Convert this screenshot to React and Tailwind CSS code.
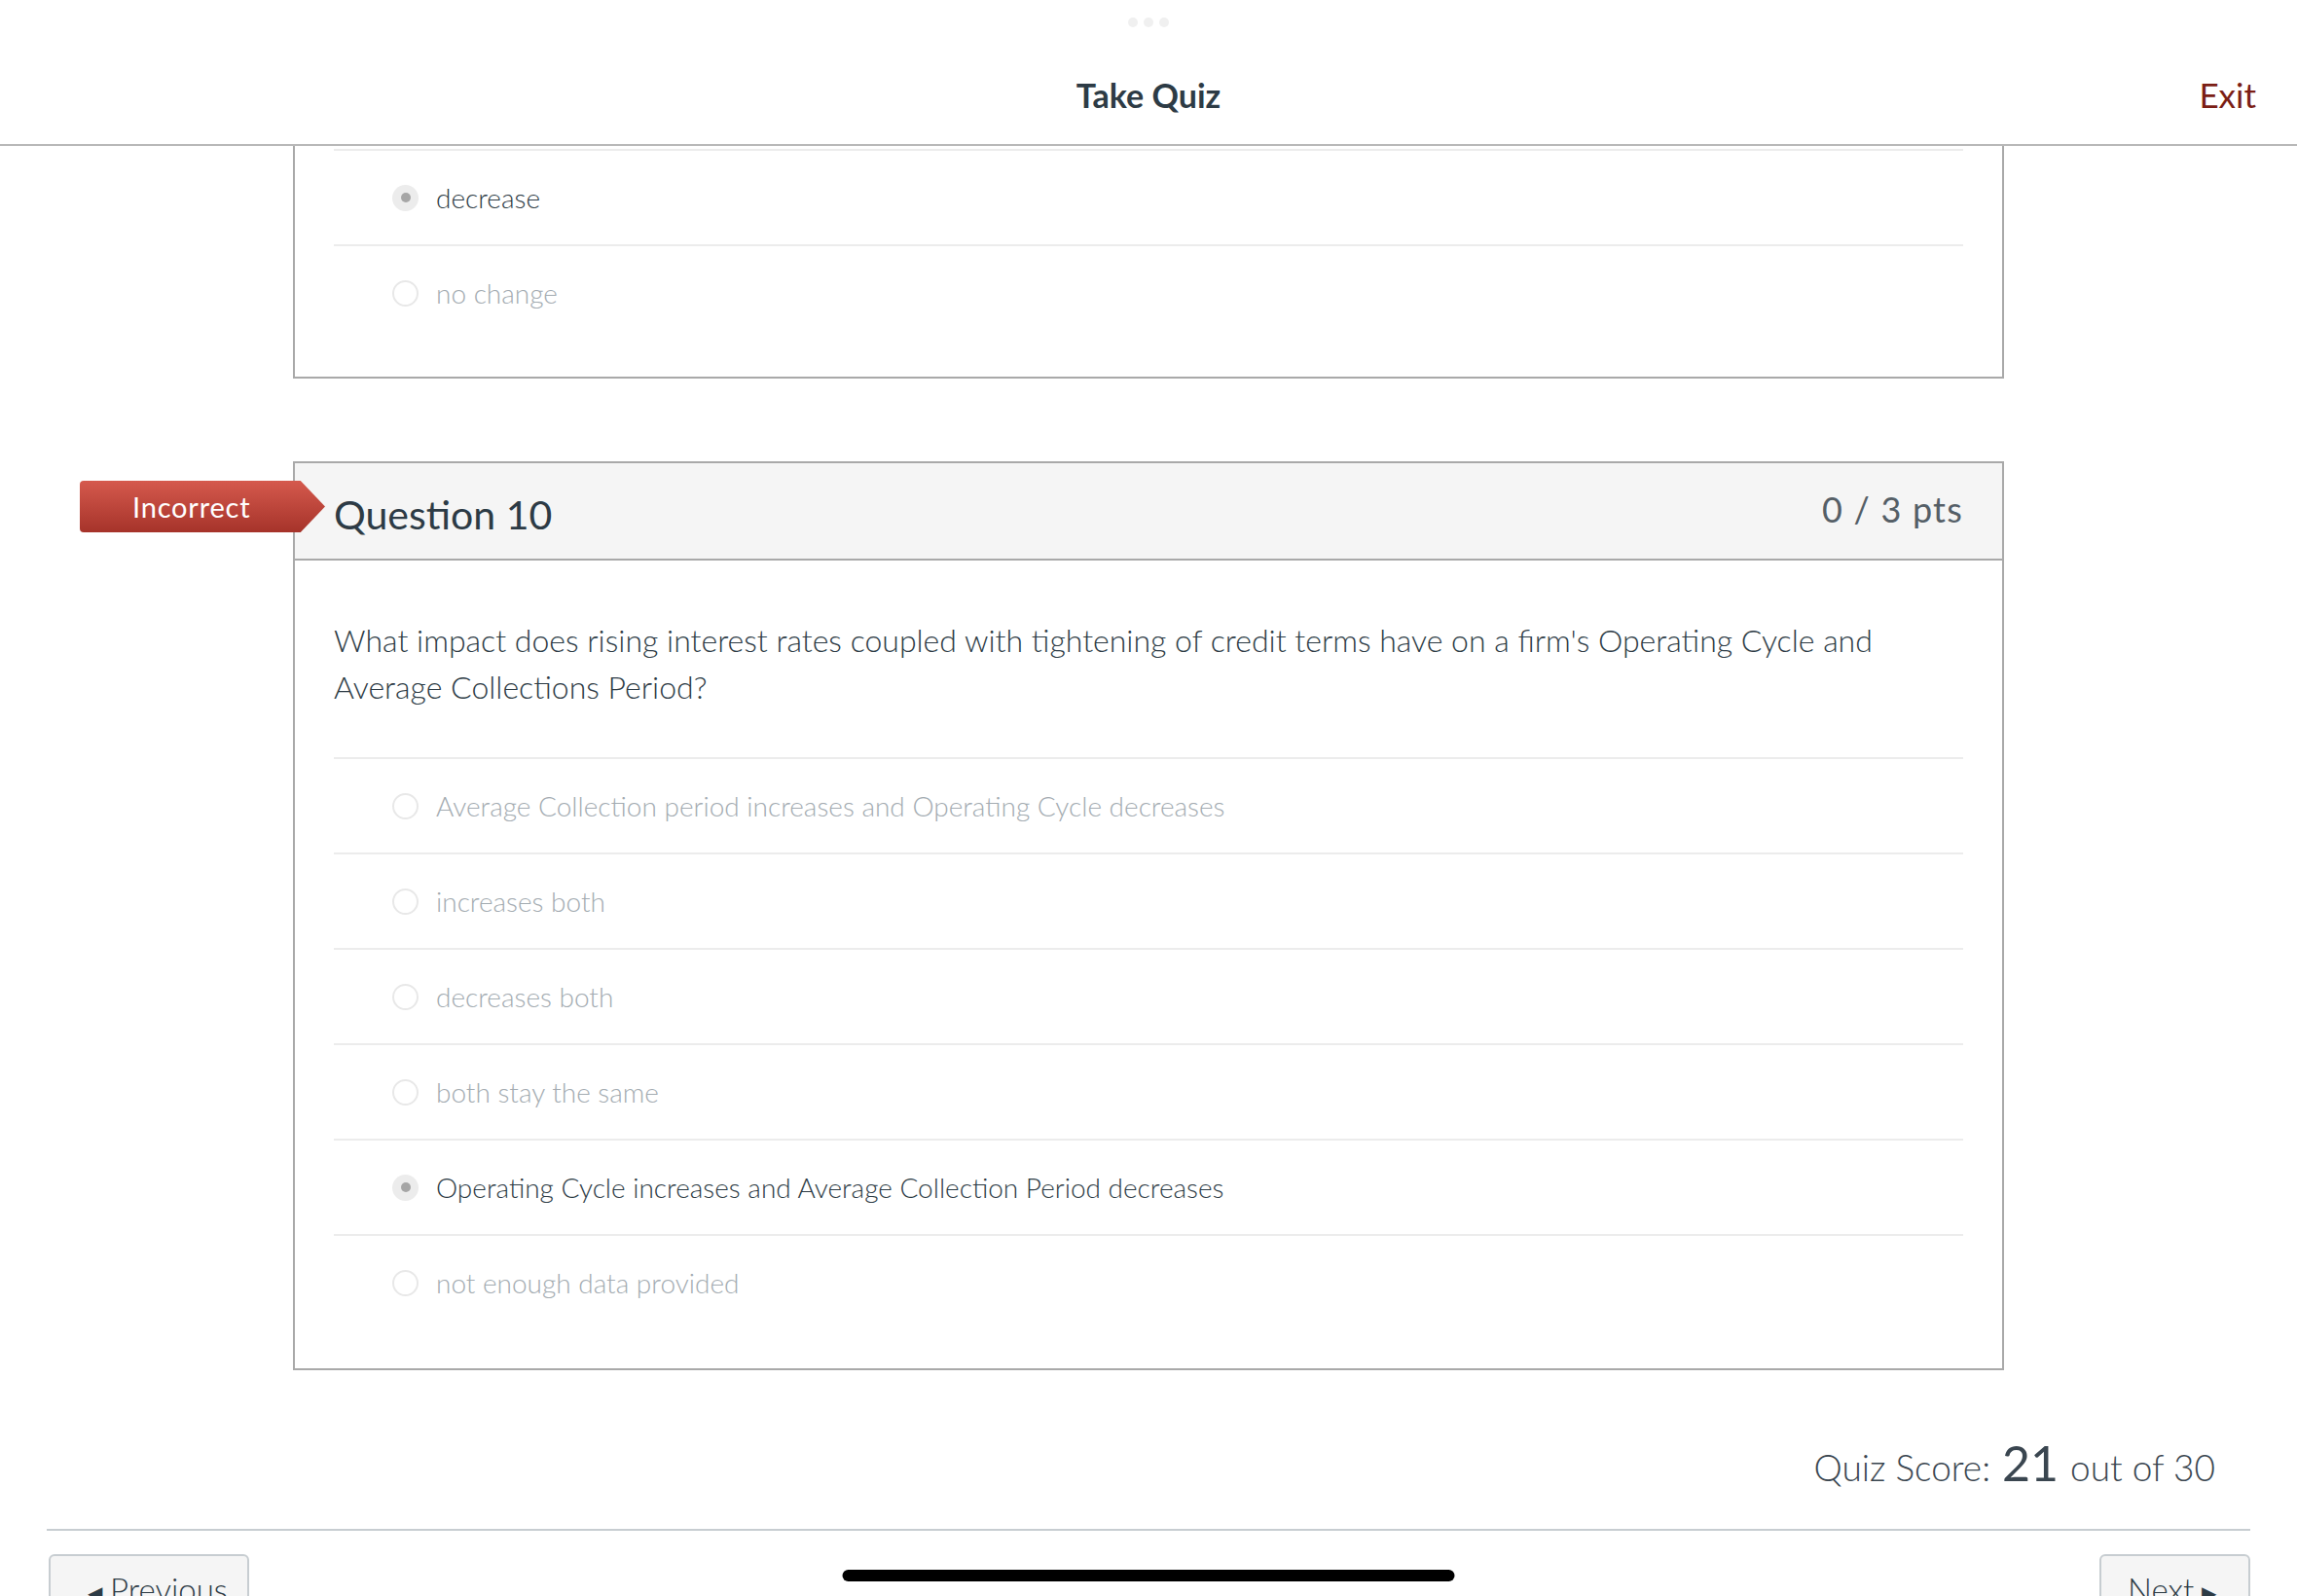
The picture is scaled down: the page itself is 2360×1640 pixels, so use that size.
import React from 'react';

const q10Options = [
  { text: 'Average Collection period increases and Operating Cycle decreases', selected: false },
  { text: 'increases both', selected: false },
  { text: 'decreases both', selected: false },
  { text: 'both stay the same', selected: false },
  { text: 'Operating Cycle increases and Average Collection Period decreases', selected: true },
  { text: 'not enough data provided', selected: false },
];

function Radio({ selected }) {
  if (selected) {
    return (
      <span className="w-[27px] h-[27px] rounded-full bg-[#ececec] flex items-center justify-center shrink-0">
        <span className="w-[10px] h-[10px] rounded-full bg-[#a6a6a6]" />
      </span>
    );
  }
  return <span className="w-[27px] h-[27px] rounded-full border-2 border-[#e8e8e8] bg-white shrink-0" />;
}

function OptionRow({ text, selected, divider = true }) {
  return (
    <div className={`flex items-center h-[98px] pl-[60px] gap-[18px] ${divider ? 'border-t-2 border-[#ececec]' : ''}`}>
      <Radio selected={selected} />
      <span className={`text-[28px] font-light ${selected ? 'text-[#2d3b45]' : 'text-[#a3abb1]'}`}>{text}</span>
    </div>
  );
}

export default function App() {
  return (
    <div className="relative w-[2360px] h-[1640px] overflow-hidden bg-white font-['Lato','Liberation_Sans',sans-serif] text-[#2d3b45]">
      {/* multitasking dots */}
      <div className="absolute top-[18px] left-1/2 -translate-x-1/2 flex gap-[6px]">
        <span className="w-[10px] h-[10px] rounded-full bg-[#f0f0f0]" />
        <span className="w-[10px] h-[10px] rounded-full bg-[#f0f0f0]" />
        <span className="w-[10px] h-[10px] rounded-full bg-[#f0f0f0]" />
      </div>

      {/* Header */}
      <div className="h-[150px] pt-[46px] grid grid-cols-[1fr_auto_1fr] items-center border-b-2 border-[#b8b8b8]">
        <div />
        <h1 className="text-[34px] font-bold text-[#2d3b45]">Take Quiz</h1>
        <div className="justify-self-end pr-[42px] text-[35px] text-[#7b1e15]">Exit</div>
      </div>

      <div className="w-[1758px] mx-auto">
        {/* previous question (scrolled) */}
        <div className="border-x-2 border-b-2 border-[#a9a9a9] px-[40px] pt-[3px] pb-[38px]">
          <OptionRow text="decrease" selected />
          <OptionRow text="no change" selected={false} />
        </div>

        {/* Question 10 */}
        <div className="relative mt-[85px] border-2 border-[#a9a9a9]">
          <div className="absolute left-[-221px] top-[18px] w-[252px] h-[53px] rounded-l-[4px] bg-linear-to-b from-[#d5594d] to-[#a6332a] [clip-path:polygon(0_0,90%_0,100%_50%,90%_100%,0_100%)] flex items-center pl-[54px]">
            <span className="text-[29px] text-white tracking-[0.8px]">Incorrect</span>
          </div>

          <div className="h-[100px] bg-[#f5f5f5] border-b-2 border-[#a9a9a9] flex items-center justify-between px-[40px]">
            <h2 className="text-[41px] text-[#2d3b45] mt-[8px]">Question 10</h2>
            <span className="text-[36px] tracking-[1.2px] text-[#555f67] mb-[4px]">0 / 3 pts</span>
          </div>

          <div className="px-[40px] pb-[40px]">
            <p className="pt-[58px] mb-[48px] text-[32px] leading-[48px] font-light text-[#2d3b45]">
              What impact does rising interest rates coupled with tightening of credit terms have on a firm's Operating Cycle and Average Collections Period?
            </p>
            {q10Options.map((o, i) => (
              <OptionRow key={i} text={o.text} selected={o.selected} />
            ))}
          </div>
        </div>
      </div>

      {/* Score */}
      <div className="flex justify-end items-baseline pr-[84px] mt-[58px] font-light text-[#3a4650]">
        <span className="text-[37px]">Quiz Score:</span>
        <span className="text-[50px] font-normal mx-[12px]">21</span>
        <span className="text-[37px]">out of 30</span>
      </div>

      <div className="mx-[48px] mt-[30px] border-t-2 border-[#c7cdd1]" />

      <div className="mx-[48px] mt-[24px] flex justify-between">
        <button className="ml-[2px] w-[206px] h-[80px] bg-[#f5f5f5] border-2 border-[#c7cdd1] rounded-[6px] flex items-start pl-[38px] pt-[18px] gap-[8px] text-[33px] leading-none font-light text-[#2d3b45]">
          <span className="text-[20px] mt-[9px]">◀</span>
          <span>Previous</span>
        </button>
        <button className="w-[155px] h-[80px] bg-[#f5f5f5] border-2 border-[#c7cdd1] rounded-[6px] flex items-start pl-[27px] pt-[18px] gap-[8px] text-[33px] leading-none font-light text-[#2d3b45]">
          <span>Next</span>
          <span className="text-[20px] mt-[9px]">▶</span>
        </button>
      </div>

      {/* home indicator */}
      <div className="absolute bottom-[15px] left-1/2 -translate-x-1/2 w-[629px] h-[12px] rounded-full bg-black" />
    </div>
  );
}
